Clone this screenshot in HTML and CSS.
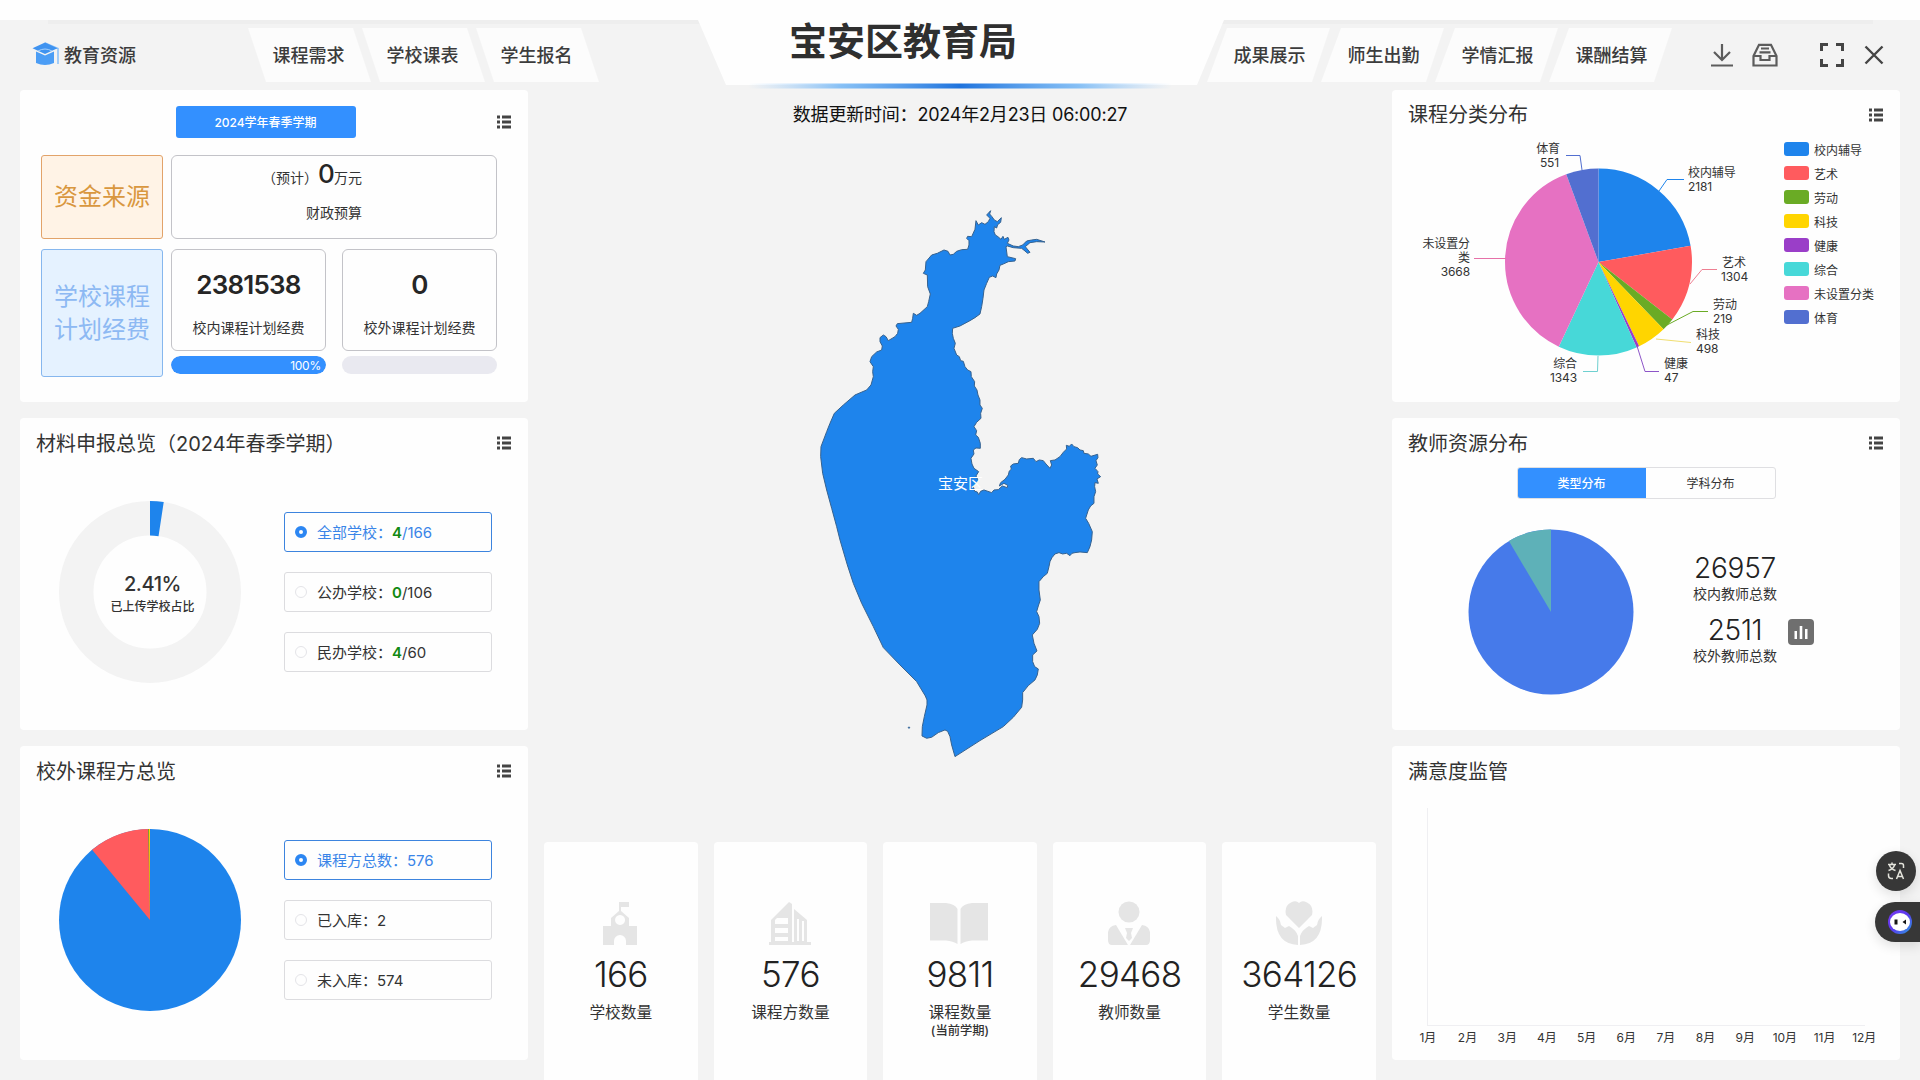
FILE: index.html
```html
<!DOCTYPE html>
<html lang="zh-CN">
<head>
<meta charset="utf-8">
<title>宝安区教育局</title>
<link rel="stylesheet" href="styles.css">
</head>
<body>
<svg class="defs" width="0" height="0">
  <symbol id="list" viewBox="0 0 14 14"><path d="M0 .5h3v3H0zM5 .5h9v3H5zM0 5.500h3v3H0zM5 5.500h9v3H5zM0 10.500h3v3H0zM5 10.500h9v3H5z"/></symbol>
</svg>

<header class="header">
  <svg class="header-bg" viewBox="0 0 1920 92" width="1920" height="92">
    <defs><linearGradient id="glow"><stop offset="0" stop-color="#8cc4fa" stop-opacity="0"/><stop offset=".22" stop-color="#62aef5" stop-opacity=".75"/><stop offset=".5" stop-color="#1f73dd"/><stop offset=".78" stop-color="#62aef5" stop-opacity=".75"/><stop offset="1" stop-color="#8cc4fa" stop-opacity="0"/></linearGradient></defs>
    <path d="M48 20H1873V24H48z" fill="#eeeeee"/>
    <path d="M0 0H1920V20H1224L1197 85H726L698 20H0z" fill="#fefefe"/>
    <rect x="748" y="83.500" width="424" height="5" rx="2.500" fill="url(#glow)"/>
  </svg>
  <div class="brand">
    <svg width="27" height="24" viewBox="0 0 27 24"><path d="M13 1 26 6.500V22" fill="none" stroke="#8cc2fa" stroke-width="1.600"/><path d="M13 .5 25.500 6.200 13 12 .5 6.200z" fill="#3f93f0"/><path d="M4 9.500 13 13.500 22 9.500V21Q13 25 4 21z" fill="#4b9df5"/><path d="M6 9Q13 5 20 9" stroke="#a5d0fc" fill="none"/></svg>
    <span>教育资源</span>
  </div>
  <nav class="tabs tabs-left"><a>课程需求</a><a>学校课表</a><a>学生报名</a></nav>
  <h1 class="title">宝安区教育局</h1>
  <nav class="tabs tabs-right"><a>成果展示</a><a>师生出勤</a><a>学情汇报</a><a>课酬结算</a></nav>
  <div class="tools">
    <svg width="24" height="24" viewBox="0 0 24 24"><path d="M12 1v15M4 9l8 8 8-8M1 22.500h22"/></svg>
    <svg class="tool-inbox" width="26" height="24" viewBox="0 0 26 24"><path d="M1.500 13 7 1.800h12L24.500 13v9.500h-23zM1.500 13h7v4h9v-4h7M9 5.500h8M7.500 9.300h11"/></svg>
    <svg class="tool-full" width="24" height="24" viewBox="0 0 24 24"><path d="M1.500 8V1.500H8M16 1.500h6.500V8M22.500 16v6.500H16M8 22.500H1.500V16"/></svg>
    <svg class="tool-close" width="20" height="20" viewBox="0 0 20 20"><path d="m1.500 1.500 17 17M18.500 1.500l-17 17"/></svg>
  </div>
</header>

<main class="board">
  <section class="col">
    <article class="panel funds">
      <div class="funds-head"><button class="term">2024学年春季学期</button><svg class="list-ico"><use href="#list"/></svg></div>
      <div class="funds-grid">
        <div class="tag tag-orange">资金来源</div>
        <div class="box box-wide"><p class="est">（预计）<b>0</b>万元</p><p>财政预算</p></div>
        <div class="tag tag-blue">学校课程<br>计划经费</div>
        <div class="fund-col"><div class="box"><b>2381538</b><p>校内课程计划经费</p></div><div class="bar"><div class="bar-fill" style="width:100%">100%</div></div></div>
        <div class="fund-col"><div class="box"><b>0</b><p>校外课程计划经费</p></div><div class="bar"></div></div>
      </div>
    </article>

    <article class="panel">
      <div class="head"><h2>材料申报总览（2024年春季学期）</h2><svg class="list-ico"><use href="#list"/></svg></div>
      <div class="split">
        <div class="donut">
          <svg width="182" height="182" viewBox="-91 -91 182 182">
            <circle r="73.750" class="ring"/>
            <path d="M0-91A91 91 0 0 1 13.730-89.960L8.520-55.850A56.500 56.500 0 0 0 0-56.500z" fill="#1e84ec"/>
          </svg>
          <div class="donut-text"><b>2.41%</b><span>已上传学校占比</span></div>
        </div>
        <ul class="options">
          <li class="on"><i></i><p>全部学校：<em>4</em>/166</p></li>
          <li><i></i><p>公办学校：<em>0</em>/106</p></li>
          <li><i></i><p>民办学校：<em>4</em>/60</p></li>
        </ul>
      </div>
    </article>

    <article class="panel">
      <div class="head"><h2>校外课程方总览</h2><svg class="list-ico"><use href="#list"/></svg></div>
      <div class="split">
        <svg class="pie" width="182" height="182" viewBox="-91 -91 182 182">
          <circle r="91" fill="#1e84ec"/>
          <path d="M0 0-57.900-70.200A91 91 0 0 1 0-91z" fill="#ff5b5e"/>
          <path d="M0 0-1.900-91H-.6z" fill="#6aab25"/><path d="M0 0-1-91H0z" fill="#ffd500"/>
        </svg>
        <ul class="options">
          <li class="on"><i></i><p>课程方总数：576</p></li>
          <li><i></i><p>已入库：2</p></li>
          <li><i></i><p>未入库：574</p></li>
        </ul>
      </div>
    </article>
  </section>

  <section class="center">
    <p class="updated">数据更新时间：2024年2月23日 06:00:27</p>
    <svg class="map" width="340" height="600" viewBox="800 190 340 600">
      <g transform="translate(800 190) scale(.3333)">
        <path class="land" d="M572 62 569 72 576 80 583 90 592 95 604 83 602 97 593 104 590 114 583 110 582 125 586 135 594 140 603 148 609 139 613 148 624 142 627 150 622 160 640 168 655 170 668 165 680 153 695 150 710 148 735 156 710 155 690 158 676 170 690 187 683 190 675 183 665 175 640 173 622 168 618 170 622 200 647 206 645 213 625 215 610 222 600 226 597 240 590 252 588 263 578 258 568 262 560 280 552 300 549 325 545 350 540 372 525 383 510 392 480 408 458 415 457 430 460 445 466 460 462 475 470 495 478 500 482 512 490 514 495 530 503 540 513 545 514 560 524 575 523 588 531 600 534 615 540 630 540 645 547 655 542 670 543 685 530 697 522 710 530 722 527 735 535 742 541 760 541 775 528 774 520 780 522 792 513 805 516 822 522 835 536 845 528 858 535 872 529 880 520 890 524 904 532 906 536 914 542 904 552 900 575 908 582 900 595 899 607 888 622 893 623 886 612 880 598 888 602 878 615 868 625 855 628 843 634 838 632 828 640 822 655 820 658 809 665 803 680 807 700 805 708 815 718 810 730 812 738 822 750 835 755 825 751 812 765 810 780 800 790 787 800 777 799 766 808 769 815 762 822 770 833 773 840 780 850 782 852 790 865 792 873 799 893 793 894 803 888 812 892 825 885 835 894 845 893 852 902 860 891 867 895 880 885 878 884 890 887 905 882 920 882 940 872 948 865 960 857 985 866 1000 877 1025 875 1050 870 1070 862 1088 840 1086 825 1088 816 1090 810 1097 800 1090 788 1092 777 1088 765 1092 756 1103 750 1115 747 1130 742 1150 730 1160 717 1175 717 1200 721 1230 715 1248 710 1265 717 1280 719 1300 712 1318 697 1335 702 1360 711 1383 698 1395 698 1415 704 1430 715 1437 712 1455 705 1470 685 1487 668 1508 668 1530 665 1552 640 1582 610 1610 540 1652 465 1700 455 1665 450 1640 443 1624 435 1620 415 1628 395 1642 380 1645 366 1638 367 1610 373 1580 381 1545 381 1530 376 1518 350 1475 300 1425 250 1373 220 1310 185 1240 160 1180 142 1125 120 1050 110 1010 95 955 80 900 68 850 62 800 63 770 80 725 90 700 103 670 130 645 165 615 200 600 213 585 220 560 218 545 220 530 210 515 215 500 230 486 245 480 247 468 240 455 240 443 250 435 258 440 265 452 285 440 293 430 295 418 288 408 292 401 335 397 338 385 340 370 350 376 360 370 382 350 386 335 391 312 383 290 382 255 370 250 376 240 378 215 395 195 412 190 432 180 444 184 450 195 460 193 470 184 485 179 503 178 507 165 507 152 500 145 503 139 515 140 525 118 528 92 535 105 545 98 555 103 565 95 570 85 560 75z"/>
        <circle class="land" cx="327" cy="1613" r="2"/>
      </g>
      <text x="938" y="489">宝安区</text>
    </svg>
    <div class="stats">
      <div class="stat"><svg width="36" height="44" viewBox="0 0 36 44"><path fill-rule="evenodd" d="M17 1h10v5h-8v4l8 7v8h8v19H24v-4a6 6 0 0 0-12 0v4H1V25h8v-8l8-7zM18 14a5 5 0 1 0 .1 0z"/></svg><b>166</b><span>学校数量</span></div>
      <div class="stat"><svg width="42" height="44" viewBox="0 0 42 44"><path fill-rule="evenodd" d="M0 41h2V19L20 1l3 2v38h2V8l13 11v22h4v3H0zM6 19v4h13v-6H8zM6 27v5h13v-5zM6 36v4h13v-4zM28 18v22h2V18zM33 20v20h2V20z"/></svg><b>576</b><span>课程方数量</span></div>
      <div class="stat"><svg width="60" height="44" viewBox="0 0 60 44"><path d="M1 2H17Q26 3 28.500 8V43Q24 40 17 39.500H1zM59 2H43Q34 3 31.500 8V43Q36 40 43 39.500H59z"/></svg><b>9811</b><span>课程数量</span><small>(当前学期)</small></div>
      <div class="stat"><svg width="42" height="44" viewBox="0 0 42 44"><circle cx="21" cy="11" r="10.500"/><path d="M8 24 20 44H4Q0 44 0 39V31Q1 25 8 24zM34 24 22 44H38Q42 44 42 39V31Q41 25 34 24zM17 27h8l-2 5 1 5-3 3-3-3 1-5z"/></svg><b>29468</b><span>教师数量</span></div>
      <div class="stat"><svg width="48" height="44" viewBox="0 0 48 44"><path d="M24 27 11 14Q9 5 16 1.500 21-1 24 2 27-1 32 1.500 39 5 37 14zM1 15Q5 18 6 24L10 27 14 25Q21 29 23 35V44Q0 43 1 15zM47 15Q43 18 42 24L38 27 34 25Q27 29 25 35V44Q48 43 47 15z"/></svg><b>364126</b><span>学生数量</span></div>
    </div>
  </section>

  <section class="col">
    <article class="panel">
      <div class="head"><h2>课程分类分布</h2><svg class="list-ico"><use href="#list"/></svg></div>
      <div class="cat">
        <svg class="cat-chart" width="370" height="262" viewBox="1400 140 370 262">
          <g transform="translate(1598.500 262) rotate(-90)" class="slices">
            <circle r="46.750" pathLength="360" stroke="#1e84ec" stroke-dasharray="80.030 400"/>
            <circle r="46.750" pathLength="360" stroke="#ff5b5e" stroke-dasharray="47.850 400" stroke-dashoffset="-80.030"/>
            <circle r="46.750" pathLength="360" stroke="#6aab25" stroke-dasharray="8.040 400" stroke-dashoffset="-127.880"/>
            <circle r="46.750" pathLength="360" stroke="#ffd500" stroke-dasharray="18.270 400" stroke-dashoffset="-135.920"/>
            <circle r="46.750" pathLength="360" stroke="#9a3ec8" stroke-dasharray="1.720 400" stroke-dashoffset="-154.190"/>
            <circle r="46.750" pathLength="360" stroke="#47d8d8" stroke-dasharray="49.280 400" stroke-dashoffset="-155.910"/>
            <circle r="46.750" pathLength="360" stroke="#e671c2" stroke-dasharray="134.590 400" stroke-dashoffset="-205.190"/>
            <circle r="46.750" pathLength="360" stroke="#526fd0" stroke-dasharray="20.220 400" stroke-dashoffset="-339.780"/>
          </g>
          <g fill="none">
            <path stroke="#526fd0" d="M1566 155.500H1580L1582 170"/>
            <path stroke="#1e84ec" d="M1684 179.500H1667L1659 191"/>
            <path stroke="#ee7f92" d="M1717 269.500H1702L1690 284"/>
            <path stroke="#6aab25" d="M1708 311.500H1693L1667 325"/>
            <path stroke="#f0de70" d="M1691 342.500 1656 339"/>
            <path stroke="#8d55c8" d="M1659 371.500H1645L1637 346"/>
            <path stroke="#6fd0d0" d="M1583 371.500H1597.500L1598 356"/>
            <path stroke="#e671a8" d="M1474 258.500H1506"/>
          </g>
          <g class="lbl">
            <text x="1688" y="177">校内辅导</text><text x="1688" y="191">2181</text>
            <text x="1722" y="267">艺术</text><text x="1721" y="281">1304</text>
            <text x="1713" y="309">劳动</text><text x="1713" y="323">219</text>
            <text x="1696" y="339">科技</text><text x="1696" y="353">498</text>
            <text x="1664" y="368">健康</text><text x="1664" y="382">47</text>
          </g>
          <g class="lbl lbl-end">
            <text x="1560" y="153">体育</text><text x="1559" y="167">551</text>
            <text x="1577" y="368">综合</text><text x="1577" y="382">1343</text>
            <text x="1470" y="248">未设置分</text><text x="1470" y="262">类</text><text x="1470" y="276">3668</text>
          </g>
        </svg>
        <ul class="legend">
          <li><i class="c1"></i>校内辅导</li><li><i class="c2"></i>艺术</li><li><i class="c3"></i>劳动</li><li><i class="c4"></i>科技</li>
          <li><i class="c5"></i>健康</li><li><i class="c6"></i>综合</li><li><i class="c7"></i>未设置分类</li><li><i class="c8"></i>体育</li>
        </ul>
      </div>
    </article>

    <article class="panel">
      <div class="head"><h2>教师资源分布</h2><svg class="list-ico"><use href="#list"/></svg></div>
      <div class="switch"><span class="active">类型分布</span><span>学科分布</span></div>
      <div class="teachers">
        <svg width="166" height="166" viewBox="-83 -83 166 166"><circle r="82.500" fill="#467aea"/><path d="M0 0-42.100-70.900A82.500 82.500 0 0 1 0-82.500z" fill="#5eb1b8"/></svg>
        <div class="t-nums">
          <b>26957</b><span>校内教师总数</span>
          <b>2511</b><span>校外教师总数</span>
        </div>
        <svg class="t-ico" width="26" height="26" viewBox="0 0 26 26"><rect width="26" height="26" rx="4" fill="#6f6f6f"/><path d="M6.500 12H9v8H6.500zM11.700 7h2.600v13h-2.600zM17 10h2.500v10H17z" fill="#fff"/></svg>
      </div>
    </article>

    <article class="panel">
      <div class="head"><h2>满意度监管</h2></div>
      <div class="plot"></div>
      <div class="months"><span>1月</span><span>2月</span><span>3月</span><span>4月</span><span>5月</span><span>6月</span><span>7月</span><span>8月</span><span>9月</span><span>10月</span><span>11月</span><span>12月</span></div>
    </article>
  </section>
</main>

<div class="float float-lang"><svg width="18" height="18" viewBox="0 0 18 18" fill="none" stroke="#e4e4dc" stroke-width="1.500"><path d="M1 2.500h8M5 .5v2M2.500 3q1 4 6 5.500M7.500 3q-1 4-6 5.500M12 1.500h2.500q2 0 2 2V6M1.500 11.500v2q0 3 3 3H6M9.500 17 13 8.500 16.500 17M10.800 14.500h4.500"/></svg></div>
<div class="float float-bot"><svg width="26" height="26" viewBox="0 0 26 26"><defs><linearGradient id="halo" x1="0" y1="0" x2="1" y2="1"><stop offset="0" stop-color="#7a38f0"/><stop offset=".5" stop-color="#5a3af0"/><stop offset="1" stop-color="#2aa0e0"/></linearGradient></defs><circle cx="13" cy="13" r="12" fill="url(#halo)"/><ellipse cx="13" cy="13" rx="10" ry="9" fill="#fff"/><path d="M7.500 10.500h3v5h-3zM19 10.500 15.500 13l3.500 2.500z" fill="#151515"/></svg></div>
</body>
</html>
```
FILE: styles.css
```css
* { box-sizing: border-box; margin: 0; padding: 0; }
body {
  width: 1920px; height: 1080px; overflow: hidden;
  background: #f3f3f3; color: #333;
  font-family: Inter, "Noto Sans CJK SC", sans-serif;
  font-size: 14px; letter-spacing: 0;
}
ul { list-style: none; }
i, em { font-style: normal; }
h1, h2 { font-weight: 400; }
svg { display: block; flex: none; }
.defs { position: absolute; }

/* header */
.header {
  position: relative; height: 90px;
  display: grid; grid-template-columns: 246px 353px 608px 467px 1fr;
}
.header > * { position: relative; }
.header > .header-bg { position: absolute; left: 0; top: 0; }
.brand { display: flex; align-items: center; gap: 5px; padding: 18px 0 0 32px; height: 90px; font-size: 18px; font-weight: 500; color: #3c3c3c; }
.tabs { display: flex; padding-top: 28px; }
.tabs a {
  flex: none; width: 125px; height: 54px; margin-right: -11px; padding-bottom: 2px;
  display: flex; align-items: center; justify-content: center;
  background: #fcfcfc; font-size: 18px; font-weight: 500; color: #3c3c3c;
}
.tabs-left a { clip-path: polygon(2px 0, 107px 0, 100% 100%, 20px 100%); }
.tabs-right a { clip-path: polygon(20px 0, 123px 0, 105px 100%, 0 100%); }
.title { padding-left: 190px; font-size: 38px; line-height: 83px; font-weight: 700; color: #2f2f2f; white-space: nowrap; }
.tools { display: flex; align-items: center; padding: 19px 0 0 36px; height: 90px; }
.tools svg { fill: none; stroke: #5c5c5c; stroke-width: 2.2; }
.tools .tool-inbox { margin-left: 18px; }
.tools .tool-full { margin-left: 42px; stroke-width: 3; stroke: #444; }
.tools .tool-close { margin-left: 20px; stroke-width: 2.4; stroke: #444; }

/* board */
.board { display: grid; grid-template-columns: 508px 832px 508px; column-gap: 16px; padding: 0 20px; height: 990px; }
.col { display: flex; flex-direction: column; gap: 16px; }
.panel { height: 312px; background: #fefefe; border-radius: 4px; display: flex; flex-direction: column; }
.panel:last-child { height: 314px; }
.head { height: 50px; flex: none; display: flex; align-items: center; justify-content: space-between; padding: 0 17px 0 16px; }
.head h2 { font-size: 20px; line-height: 28px; white-space: nowrap; font-weight: 400; }
.list-ico { width: 14px; height: 14px; fill: #444; }
.col .panel + .panel h2 { padding-top: 1px; }

/* funds */
.funds-head { display: grid; grid-template-columns: 1fr 180px 1fr; padding: 16px 17px 0 16px; align-items: center; }
.term { grid-column: 2; height: 32px; margin-left: -8px; padding-bottom: 2px; width: 180px; border: 0; border-radius: 3px; background: #3390ff; color: #fff; font: 500 12px Inter, "Noto Sans CJK SC", sans-serif; }
.funds-head .list-ico { justify-self: end; }
.funds-grid {
  display: grid; grid-template-columns: 122px 155px 155px; grid-template-rows: 84px 128px;
  column-gap: 0; row-gap: 10px; padding: 17px 0 0 21px;
}
.tag { display: flex; align-items: center; justify-content: center; padding-bottom: 1px; font-size: 24px; line-height: 33px; border: 1px solid; border-radius: 3px; }
.tag-orange { color: #d9973f; background: #fff3e6; border-color: #e2a36a; }
.tag-blue { color: #8db9f3; background: #e5f2ff; border-color: #86b7ee; }
.box { display: flex; flex-direction: column; align-items: center; border: 1px solid #c3c3c8; border-radius: 6px; white-space: nowrap; }
.box b { font-weight: 600; font-size: 26px; color: #262626; letter-spacing: -.03em; }
.box-wide { grid-column: 2 / 4; margin-left: 8px; width: 326px; }
.est { line-height: 36px; margin-right: 44px; }
.box-wide .est b { font-weight: 500; }
.box-wide .est + p { line-height: 20px; margin-top: 7px; }
.fund-col { margin-left: 8px; width: 155px; }
.fund-col + .fund-col { margin-left: 24px; }
.fund-col .box { height: 102px; padding-top: 19px; }
.fund-col .box b { line-height: 32px; }
.fund-col .box p { line-height: 20px; margin-top: 17px; }
.bar { height: 18px; margin-top: 5px; border-radius: 9px; background: #e9e9f0; overflow: hidden; }
.bar-fill { height: 18px; border-radius: 9px; background: #3390ff; color: #fff; font-size: 12px; line-height: 19px; text-align: right; padding-right: 5px; letter-spacing: -.02em; }

/* chart + options */
.split { flex: 1; display: flex; padding: 33px 0 0 39px; align-items: flex-start; }
.donut { display: grid; place-items: center; }
.donut > * { grid-area: 1 / 1; }
.ring { fill: none; stroke: #f3f3f3; stroke-width: 34.5; }
.donut-text { display: flex; flex-direction: column; align-items: center; margin: 3px 0 0 5px; }
.donut-text b { font-size: 20px; line-height: 26px; font-weight: 500; letter-spacing: -.02em; }
.donut-text span { font-size: 12px; line-height: 20px; font-weight: 500; }
.options { margin: 11px 0 0 43px; display: flex; flex-direction: column; gap: 20px; }
.options li { width: 208px; height: 40px; border: 1px solid #dcdcdf; border-radius: 3px; display: flex; align-items: center; padding-left: 10px; font-size: 15px; }
.options p { padding-bottom: 2px; }
.options i { width: 12px; height: 12px; border-radius: 50%; border: 1px solid #e4e4e8; margin-right: 10px; }
.options em { color: #128a12; font-weight: 600; }
.options .on { border-color: #3d84de; color: #3a85e8; }
.options .on i { border: 4px solid #2c86f2; }

/* centre */
.center { display: flex; flex-direction: column; }
.updated { height: 50px; line-height: 49px; text-align: center; font-size: 18px; color: #111; letter-spacing: -.2px; }
.map { margin: 50px 0 0 256px; }
.land { fill: #1e84ec; stroke: #35618f; stroke-width: 3; stroke-linejoin: round; }
.map text { font-size: 15px; fill: #fff; }
.stats { display: grid; grid-template-columns: repeat(5, 1fr); gap: 16px; margin-top: 52px; height: 238px; }
.stat { background: #fefefe; border-radius: 4px 4px 0 0; display: flex; flex-direction: column; align-items: center; padding-top: 59px; }
.stat svg { fill: #e5e5e5; margin-right: 1px; }
.stat b { font-weight: 300; font-size: 35px; line-height: 42px; margin-top: 8px; color: #222; letter-spacing: -.02em; }
.stat span { font-size: 15.7px; line-height: 22px; margin-top: 7px; }
.stat small { font-size: 12.3px; line-height: 14px; font-weight: 500; }

/* categories */
.cat { display: flex; }
.cat-chart { margin-left: 8px; }
.slices circle { fill: none; stroke-width: 93.5; }
.lbl { font-size: 12px; fill: #333; letter-spacing: -.01em; }
.lbl-end { text-anchor: end; }
.legend { margin: -3px 0 0 14px; white-space: nowrap; }
.legend li { height: 24px; display: flex; align-items: center; gap: 5px; font-size: 12px; }
.legend i { width: 25px; height: 14px; border-radius: 3px; }
.c1 { background: #1e84ec; } .c2 { background: #ff5b5e; } .c3 { background: #6aab25; } .c4 { background: #ffd500; }
.c5 { background: #9a3ec8; } .c6 { background: #47d8d8; } .c7 { background: #e671c2; } .c8 { background: #526fd0; }

/* teachers */
.switch { margin: -1px 0 0 125px; width: 259px; height: 32px; display: flex; border: 1px solid #dfdfe2; border-radius: 3px; overflow: hidden; flex: none; }
.switch span { flex: 1; display: flex; align-items: center; justify-content: center; padding-bottom: 2px; font-size: 12px; }
.switch .active { margin: -1px 0 -1px -1px; background: #3390ff; color: #fff; font-weight: 500; }
.teachers { display: flex; align-items: flex-start; padding: 30px 0 0 76px; }
.t-nums { width: 90px; margin: 20px 0 0 56px; display: flex; flex-direction: column; align-items: center; }
.t-nums b { font-size: 28px; font-weight: 300; line-height: 38px; color: #222; letter-spacing: -.01em; }
.t-nums span { font-size: 14px; line-height: 14px; margin-bottom: 10px; }
.t-ico { margin: 90px 0 0 8px; }

/* satisfaction */
.plot { margin: 12px 0 0 35px; width: 438px; height: 218px; border-left: 1px solid #efeff2; border-bottom: 1px solid #efeff2; flex: none; }
.months { display: flex; margin-left: 16px; width: 476px; }
.months span { flex: 1; text-align: center; font-size: 12px; line-height: 24px; }

/* floating buttons */
.float { position: absolute; background: #373737; display: flex; align-items: center; box-shadow: 0 4px 12px rgba(0, 0, 0, .12); }
.float-lang { left: 1876px; top: 851px; width: 40px; height: 40px; border-radius: 50%; justify-content: center; }
.float-bot { left: 1875px; top: 902px; width: 45px; height: 40px; border-radius: 20px 0 0 20px; padding-left: 12px; }
```
